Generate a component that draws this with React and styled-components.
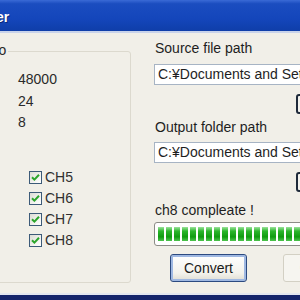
import styled, { createGlobalStyle } from "styled-components";

const GlobalStyle = createGlobalStyle`
  html, body {
    margin: 0;
    padding: 0;
    background: #f1efe8;
    overflow: hidden;
  }
`;

const Window = styled.div`
  width: 300px;
  height: 300px;
  overflow: hidden;
  display: flex;
  flex-direction: column;
  background: #f1efe8;
  font-family: "Liberation Sans", Arial, sans-serif;
  font-size: 14px;
  color: #1e1e1e;
  box-sizing: border-box;
  border-bottom: 5px solid #14246a;
  box-shadow: inset 0 -2px 0 #e3e6ef;
`;

const TitleBar = styled.div`
  height: 31px;
  flex: none;
  display: flex;
  align-items: center;
  background: linear-gradient(180deg, #3a6ad6 0%, #1b4dc0 12%, #1446bb 60%, #0f3ea9 100%);
  border-bottom: 2px solid #c9d3ea;
`;

const TitleText = styled.span`
  margin-left: -57px;
  margin-top: 3px;
  color: #ffffff;
  font-weight: bold;
  font-size: 14px;
  white-space: nowrap;
  text-shadow: 1px 1px 0 #0a2a80;
`;

const Body = styled.div`
  flex: 1;
  display: grid;
  grid-template-columns: 154px 1fr;
  min-height: 0;
`;

const GroupBox = styled.div`
  position: relative;
  margin: 18px 0 0 -10px;
  width: 141px;
  height: 232px;
  box-sizing: border-box;
  border: 1px solid #dcd9ce;
  border-radius: 3px;
  padding: 17px 0 0 27px;
`;

const Legend = styled.span`
  position: absolute;
  top: -10px;
  left: -8px;
  padding-right: 2px;
  background: #f1efe8;
  line-height: 16px;
  color: #2a2a2a;
`;

const Values = styled.div`
  display: flex;
  flex-direction: column;
  line-height: 21.5px;
  color: #2a2a2a;
`;

const Channels = styled.div`
  display: flex;
  flex-direction: column;
  margin: 33px 0 0 11px;
`;

const CheckRow = styled.label`
  display: flex;
  align-items: center;
  gap: 3px;
  height: 21px;
  color: #303030;
`;

const CheckBox = styled.span`
  width: 13px;
  height: 13px;
  box-sizing: border-box;
  border: 1px solid #3c5a78;
  background: linear-gradient(135deg, #dcdcd4 0%, #f6f6f3 70%, #ffffff 100%);
  display: flex;
  align-items: center;
  justify-content: center;
`;

const RightPane = styled.div`
  display: flex;
  flex-direction: column;
  padding-top: 7px;
  min-width: 0;
`;

const FieldLabel = styled.div`
  line-height: 16px;
  margin-left: 1px;
  margin-top: ${(p) => p.$top || 0}px;
  white-space: nowrap;
`;

const PathBox = styled.div`
  margin-top: ${(p) => p.$top}px;
  width: 170px;
  height: 21px;
  box-sizing: border-box;
  border: 1px solid #a7b4c4;
  background: #ffffff;
  padding: 1px 0 0 3px;
  line-height: 17px;
  white-space: nowrap;
  overflow: hidden;
`;

const BrowseRow = styled.div`
  display: flex;
  justify-content: flex-end;
  margin-top: 9px;
  width: 146px;
`;

const BrowseButton = styled.button`
  flex: none;
  width: 30px;
  height: 20px;
  margin-right: -30px;
  transform: translateX(-4px);
  box-sizing: border-box;
  border: 2px solid #1f2a3a;
  border-radius: 3px;
  background: #f4f3ee;
  padding: 0;
`;

const Progress = styled.div`
  margin-top: 4px;
  width: 160px;
  height: 24px;
  box-sizing: border-box;
  border: 1px solid #8c8c86;
  border-radius: 3px;
  background: #ffffff;
  padding: 4px 3px;
`;

const ProgressFill = styled.div`
  height: 100%;
  background:
    repeating-linear-gradient(90deg, transparent 0 6px, #ffffff 6px 8px),
    linear-gradient(180deg, #9be39b 0%, #2cb52c 30%, #109c10 70%, #4ec44e 100%);
`;

const ButtonRow = styled.div`
  display: flex;
  gap: 36px;
  margin: 8px 0 0 16px;
`;

const PushButton = styled.button`
  flex: none;
  width: 77px;
  height: 28px;
  box-sizing: border-box;
  border: 1px solid ${(p) => (p.disabled ? "#d3d0c4" : "#2c4a80")};
  border-radius: 3px;
  background: ${(p) =>
    p.disabled ? "#f6f5f0" : "linear-gradient(180deg, #ffffff 0%, #f3f2ec 70%, #dedcd2 100%)"};
  box-shadow: ${(p) => (p.disabled ? "none" : "inset 0 0 0 2px #9fb8e2")};
  font-family: "Liberation Sans", Arial, sans-serif;
  font-size: 14px;
  color: #1a1a1a;
  padding: 0;
`;

function Check() {
  return (
    <svg width="9" height="9" viewBox="0 0 9 9">
      <path d="M1 4.2 L3.4 6.6 L8 1.8" fill="none" stroke="#2ba52b" strokeWidth="2" />
    </svg>
  );
}

const info = ["48000", "24", "8"];
const channels = ["CH5", "CH6", "CH7", "CH8"];

export default function App() {
  return (
    <>
      <GlobalStyle />
      <Window>
        <TitleBar>
          <TitleText>Converter</TitleText>
        </TitleBar>
        <Body>
          <GroupBox>
            <Legend>Info</Legend>
            <Values>
              {info.map((v) => (
                <span key={v}>{v}</span>
              ))}
            </Values>
            <Channels>
              {channels.map((c) => (
                <CheckRow key={c}>
                  <CheckBox>
                    <Check />
                  </CheckBox>
                  {c}
                </CheckRow>
              ))}
            </Channels>
          </GroupBox>
          <RightPane>
            <FieldLabel>Source file path</FieldLabel>
            <PathBox $top={8}>C:¥Documents and Settings</PathBox>
            <BrowseRow>
              <BrowseButton />
            </BrowseRow>
            <FieldLabel $top={5}>Output folder path</FieldLabel>
            <PathBox $top={7}>C:¥Documents and Settings</PathBox>
            <BrowseRow>
              <BrowseButton />
            </BrowseRow>
            <FieldLabel $top={10}>ch8 compleate !</FieldLabel>
            <Progress>
              <ProgressFill style={{ width: "100%" }} />
            </Progress>
            <ButtonRow>
              <PushButton>Convert</PushButton>
              <PushButton disabled>Cancel</PushButton>
            </ButtonRow>
          </RightPane>
        </Body>
      </Window>
    </>
  );
}
